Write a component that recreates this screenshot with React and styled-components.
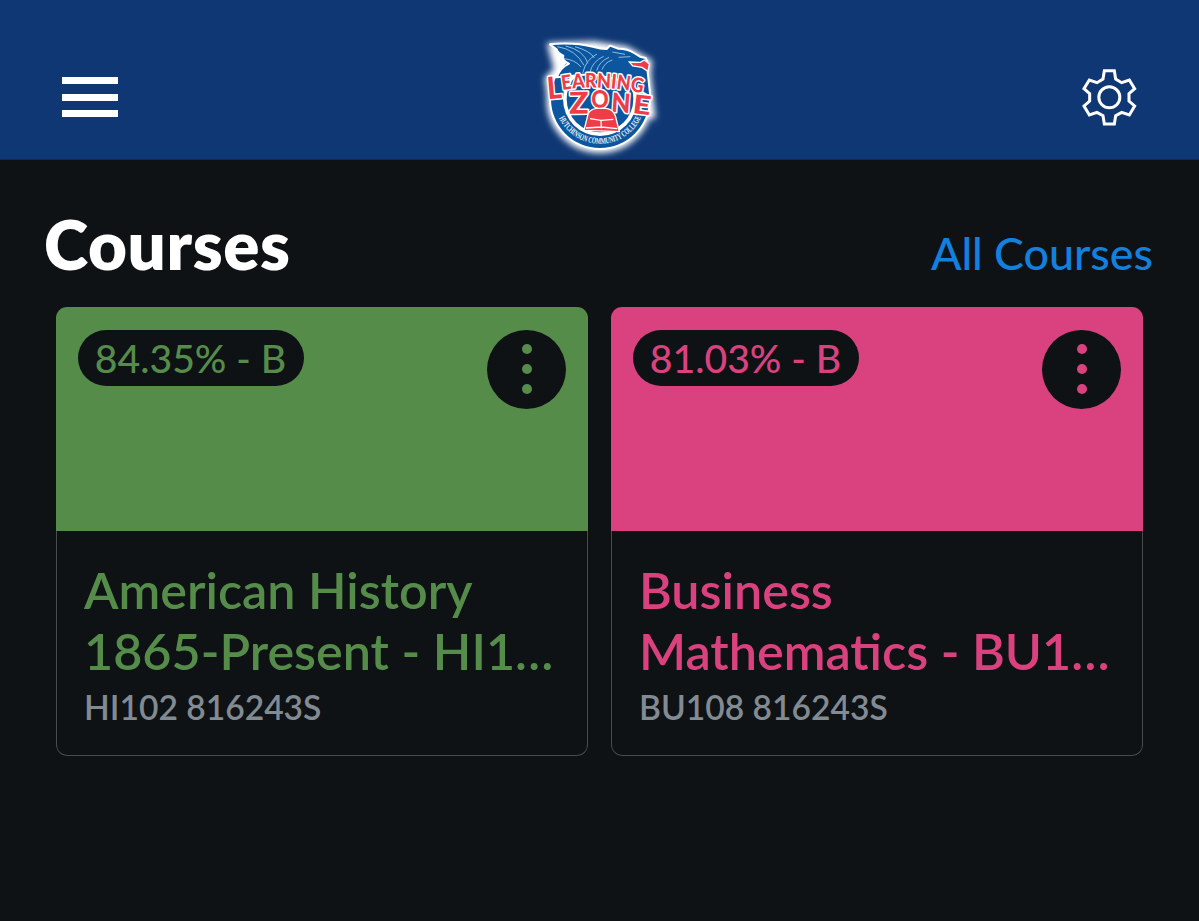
import React from "react";
import styled, { createGlobalStyle } from "styled-components";

const GlobalStyle = createGlobalStyle`
  * {
    box-sizing: border-box;
  }

  body {
    margin: 0;
    background: #0e1215;
    font-family: Lato, "Liberation Sans", sans-serif;
  }

  h1, h2, p {
    margin: 0;
  }

  button {
    border: 0;
    padding: 0;
    background: none;
    font: inherit;
  }
`;

const Page = styled.div`
  min-height: 921px;
  background: #0e1215;
`;

const Header = styled.header`
  height: 160px;
  padding: 30px 61px 0;
  display: flex;
  justify-content: space-between;
  background: #0e3774;
  border-bottom: 1px solid #1b2a40;
`;

const MenuButton = styled.button`
  width: 57px;
  height: 40px;
  margin-top: 47px;
  display: flex;
  flex-direction: column;
  justify-content: space-between;
`;

const MenuBar = styled.span`
  width: 56px;
  height: 7px;
  margin-left: 1px;
  background: #fff;
`;

const SettingsButton = styled.button`
  width: 57px;
  height: 57px;
  margin-top: 39px;
`;

const LogoSvg = styled.svg`
  width: 140px;
  height: 130px;
  margin-left: 1px;
  display: block;
`;

const GearSvg = styled.svg`
  width: 57px;
  height: 57px;
  display: block;
`;

const TitleRow = styled.div`
  height: 147px;
  padding: 44px 46px 0 44px;
  display: flex;
  justify-content: space-between;
  align-items: baseline;
`;

const Title = styled.h1`
  font-size: 67.2px;
  line-height: 81px;
  font-weight: 800;
  letter-spacing: 0.6px;
  color: #fff;
`;

const AllCourses = styled.a`
  font-size: 44.8px;
  font-weight: 500;
  color: #1380de;
`;

const CardList = styled.main`
  padding: 0 56px;
  display: grid;
  grid-template-columns: 1fr 1fr;
  gap: 23px;
`;

const Card = styled.article`
  height: 449px;
  border-radius: 11px;
  overflow: hidden;
  display: flex;
  flex-direction: column;
`;

const CardTop = styled.div`
  height: 224px;
  padding: 23px 22px;
  display: flex;
  justify-content: space-between;
  align-items: flex-start;
  background: ${({ $color }) => $color};
`;

const Grade = styled.span`
  width: 226px;
  height: 56px;
  padding: 0 1px 2px 0;
  border-radius: 28px;
  display: flex;
  align-items: center;
  justify-content: center;
  background: #0e1215;
  color: ${({ $color }) => $color};
  font-size: 39.2px;
  font-weight: 500;
  white-space: nowrap;
`;

const MoreButton = styled.button`
  width: 79px;
  height: 79px;
  padding-bottom: 1px;
  border-radius: 50%;
  display: flex;
  flex-direction: column;
  align-items: center;
  justify-content: center;
  gap: 10px;
  background: #0e1215;
`;

const Dot = styled.span`
  width: 10px;
  height: 10px;
  border-radius: 50%;
  background: ${({ $color }) => $color};
`;

const CardBody = styled.div`
  flex: 1;
  padding: 29px 27px 0;
  border: 1px solid #484c50;
  border-top: 0;
  border-radius: 0 0 11px 11px;
`;

const CourseName = styled.h2`
  font-size: 50.3px;
  line-height: 60.5px;
  font-weight: 600;
  color: ${({ $color }) => $color};
  white-space: nowrap;
`;

const CourseCode = styled.p`
  margin-top: 6px;
  font-size: 33.6px;
  line-height: 40px;
  font-weight: 600;
  color: #828a92;
`;

const courses = [
  {
    id: 1,
    grade: "84.35% - B",
    name: ["American History", "1865-Present - HI1…"],
    code: "HI102 816243S",
    color: "#568c4a",
  },
  {
    id: 2,
    grade: "81.03% - B",
    name: ["Business", "Mathematics - BU1…"],
    code: "BU108 816243S",
    color: "#da427f",
  },
];

function Logo() {
  return (
    <LogoSvg viewBox="0 0 420 390">
      <defs>
        <filter id="glow" x="-20%" y="-20%" width="140%" height="140%">
          <feGaussianBlur stdDeviation="9" />
        </filter>
        <path id="ring" d="M75 222 A136 136 0 0 0 345 222" />
        <path id="arc" d="M97 180 Q205 161 345 191" />
      </defs>
      <g fill="#fff" stroke="#fff" strokeWidth="12" filter="url(#glow)">
        <circle cx="209" cy="210" r="153" />
        <path d="M58 44 L190 40 L290 55 L360 95 L356 130 L370 260 L60 222 L50 145 L78 120 Z" />
      </g>
      <circle cx="210" cy="207" r="153" fill="#fff" />
      <circle cx="210" cy="207" r="147" fill="#0c56a0" />
      <circle cx="210" cy="207" r="111" fill="#fff" />
      <circle cx="210" cy="207" r="100" fill="#0c56a0" />

      {/* dragon */}
      <path
        d="M60 43 Q130 36 192 51 Q216 58 230 57 L240 47 L264 56 Q292 56 312 69 L330 80 L347 84 L352 96 L353 126 L361 200 L268 150 L185 132 L80 142 Q92 112 117 101 Q95 92 100 77 Q84 70 80 58 Z"
        fill="#0c56a0"
        stroke="#fff"
        strokeWidth="6"
        strokeLinejoin="round"
      />
      <path
        d="M82 50 Q137 58 162 106 M107 48 Q160 60 174 100 M135 50 Q181 63 193 84 M102 86 Q135 89 153 111 M201 72 Q167 89 158 130 M221 79 Q187 94 180 127 M237 82 Q207 95 200 122 M247 90 Q224 97 216 119 M247 66 L285 73 M266 82 L301 80"
        fill="none"
        stroke="#8fbbe0"
        strokeWidth="3"
      />
      <path d="M298 96 L331 97 L343 90 L358 102 L354 124 L336 112 L308 108 Z" fill="#ef3c47" stroke="#fff" strokeWidth="4" />

      <text fill="#e9f4fb" fontFamily="Liberation Serif, serif" fontWeight="700" fontSize="26">
        <textPath href="#ring" startOffset="44" textLength="308" lengthAdjust="spacingAndGlyphs">
          HUTCHINSON COMMUNITY COLLEGE
        </textPath>
      </text>

      {/* lettering */}
      <circle cx="213" cy="206" r="20" fill="#fff" />
      <g
        fill="#ef3c47"
        stroke="#fff"
        strokeWidth="9"
        strokeLinejoin="round"
        paintOrder="stroke"
        fontFamily="Lato, sans-serif"
        fontWeight="900"
      >
        <g transform="translate(54 208) rotate(-5) scale(0.9 1)">
          <text fontSize="92">L</text>
        </g>
        <text fontSize="60">
          <textPath href="#arc" textLength="242" lengthAdjust="spacingAndGlyphs">
            EARNING
          </textPath>
        </text>
        <g transform="translate(118 251) rotate(-1) scale(1.07 1)">
          <text fontSize="90">Z</text>
        </g>
        <g transform="translate(184 235) scale(0.87 1)">
          <text fontSize="74">O</text>
        </g>
        <g transform="translate(242 245) rotate(4) scale(0.93 1)">
          <text fontSize="80">N</text>
        </g>
        <g transform="translate(306 249) rotate(7) scale(1.2 1)">
          <text fontSize="78">E</text>
        </g>
      </g>

      {/* reader with the open book */}
      <path
        d="M162 301 L174 253 Q180 237 200 235 L228 235 Q248 237 256 257 L268 305 Z"
        fill="#ef3c47"
        stroke="#fff"
        strokeWidth="4"
      />
      <path d="M180 266 L213 271 L250 268 M213 271 L214 295 M168 294 L214 291 L262 296" fill="none" stroke="#fff" strokeWidth="4" />
    </LogoSvg>
  );
}

function Gear() {
  return (
    <GearSvg viewBox="62 56 171 171">
      <path
        d="M132 61 H162 L166 86 L184 97 L207 89 L223 115 L206 130 V152 L223 167 L207 194 L184 186 L166 196 L162 221 H132 L128 196 L110 186 L87 194 L71 167 L88 152 V130 L71 115 L87 89 L110 97 L128 86 Z"
        fill="none"
        stroke="#fff"
        strokeWidth="9"
      />
      <circle cx="147" cy="141" r="31.5" fill="none" stroke="#fff" strokeWidth="9" />
    </GearSvg>
  );
}

function CourseCard({ course }) {
  const { grade, name, code, color } = course;

  return (
    <Card>
      <CardTop $color={color}>
        <Grade $color={color}>{grade}</Grade>
        <MoreButton aria-label="More">
          <Dot $color={color} />
          <Dot $color={color} />
          <Dot $color={color} />
        </MoreButton>
      </CardTop>
      <CardBody>
        <CourseName $color={color}>
          {name[0]}
          <br />
          {name[1]}
        </CourseName>
        <CourseCode>{code}</CourseCode>
      </CardBody>
    </Card>
  );
}

function App() {
  return (
    <Page>
      <GlobalStyle />
      <Header>
        <MenuButton aria-label="Menu">
          <MenuBar />
          <MenuBar />
          <MenuBar />
        </MenuButton>
        <Logo />
        <SettingsButton aria-label="Settings">
          <Gear />
        </SettingsButton>
      </Header>
      <TitleRow>
        <Title>Courses</Title>
        <AllCourses>All Courses</AllCourses>
      </TitleRow>
      <CardList>
        {courses.map((course) => (
          <CourseCard key={course.id} course={course} />
        ))}
      </CardList>
    </Page>
  );
}

export default App;
